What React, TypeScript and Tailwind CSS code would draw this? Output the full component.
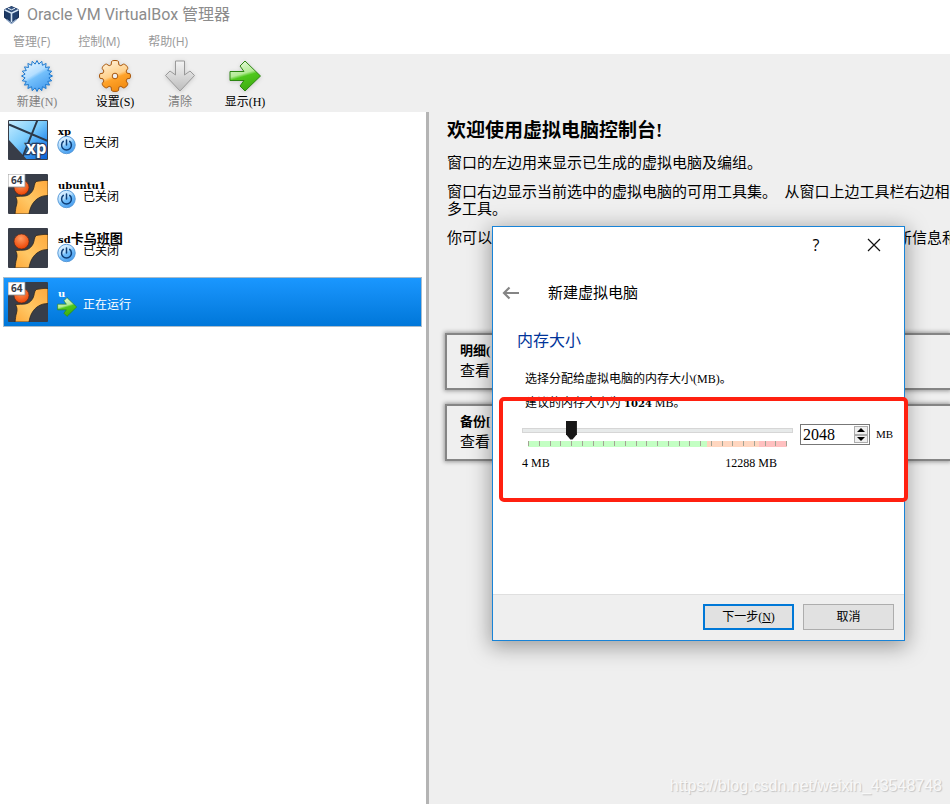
import { useState, type ReactNode } from 'react';

const CJK = "font-['Liberation_Serif','Noto_Sans_CJK_SC',serif]";
const UI = "font-['Open_Sans','Noto_Sans_CJK_SC',sans-serif]";

function star(count: number, outer: number, inner: number) {
  return Array.from({ length: count * 2 }, (_, i) => {
    const r = i % 2 ? inner : outer;
    const a = (Math.PI * i) / count - Math.PI / 2;
    return `${(16 + r * Math.cos(a)).toFixed(2)},${(16 + r * Math.sin(a)).toFixed(2)}`;
  }).join(' ');
}

function Gradients() {
  return (
    <svg className="absolute size-0" aria-hidden="true">
      <defs>
        <linearGradient id="blue" x1="0" y1="0" x2="0.6" y2="1">
          <stop offset="0" stopColor="#f2faff" />
          <stop offset="0.5" stopColor="#b4deff" />
          <stop offset="0.6" stopColor="#74c0fb" />
          <stop offset="1" stopColor="#4a9ff0" />
        </linearGradient>
        <linearGradient id="orange" x1="0.2" y1="0" x2="0.6" y2="1">
          <stop offset="0" stopColor="#fff3dc" />
          <stop offset="0.5" stopColor="#ffd08a" />
          <stop offset="0.6" stopColor="#ffa32a" />
          <stop offset="1" stopColor="#f08a10" />
        </linearGradient>
        <linearGradient id="gray" x1="0" y1="0" x2="0" y2="1">
          <stop offset="0" stopColor="#f4f4f4" />
          <stop offset="1" stopColor="#bcbcbc" />
        </linearGradient>
        <linearGradient id="green" x1="0" y1="0" x2="0.3" y2="1">
          <stop offset="0" stopColor="#effbe8" />
          <stop offset="0.5" stopColor="#b4eb96" />
          <stop offset="0.6" stopColor="#4fc81c" />
          <stop offset="1" stopColor="#3fae12" />
        </linearGradient>
        <linearGradient id="sky" x1="0" y1="0" x2="0.9" y2="1">
          <stop offset="0" stopColor="#c4ecff" />
          <stop offset="0.45" stopColor="#7cccfb" />
          <stop offset="0.7" stopColor="#3e9cf2" />
          <stop offset="1" stopColor="#0f66d8" />
        </linearGradient>
        <linearGradient id="amber" x1="1" y1="0" x2="0" y2="1">
          <stop offset="0" stopColor="#ffa93c" />
          <stop offset="0.6" stopColor="#ffc866" />
          <stop offset="1" stopColor="#ffa838" />
        </linearGradient>
        <radialGradient id="ball" cx="0.45" cy="0.3" r="0.65">
          <stop offset="0" stopColor="#ff9a60" />
          <stop offset="1" stopColor="#ee4a0a" />
        </radialGradient>
      </defs>
    </svg>
  );
}

function BoxLogo() {
  return (
    <svg className="size-5" viewBox="0 0 20 20" aria-hidden="true">
      <path d="M9.500 1 17 4.500v8L9.500 19 2 12.500v-8Z" fill="#162d54" />
      <path d="m3 4 6.500-2.500L16 4 9.500 7.500Z" fill="#33527f" />
      <path d="M2.500 5 9 8.300v9.200L3 12Z" fill="#1c3964" />
      <path d="M16.500 5 10 8.300v9.200l6-5.500Z" fill="#22406e" />
      <path d="m2.500 4.700 7 3.500 7-3.500M9.500 8v9" fill="none" stroke="#d3e3f3" strokeWidth="1.600" />
      <path d="m6 3.200 3.500 1.600L13 3.200" fill="none" stroke="#e9f1f9" strokeWidth="1" />
      <path d="m4.500 14.500 5 4 5-4" fill="none" stroke="#9cb4d2" strokeWidth="1.200" />
    </svg>
  );
}

function NewIcon() {
  return (
    <svg className="size-8 drop-shadow-sm" viewBox="0 0 32 32" aria-hidden="true">
      <polygon points={star(20, 15.5, 12)} fill="url(#blue)" stroke="#1f7ad0" strokeWidth="1" />
    </svg>
  );
}

function GearIcon() {
  return (
    <svg className="size-8 drop-shadow-sm" viewBox="0 0 32 32" aria-hidden="true">
      <path
        d="M12.500 1.500q1-1 2.500-1h2q1.500 0 2.500 1l.3 3.300 2 .9 2.700-1.600q1.300 0 2.300 1l1 1q1 1 1 2.300l-1.700 2.600.9 2.200 3 .5q.5 1 .5 2.300 0 1.300-.5 2.300l-3 .5-.9 2.200 1.700 2.600q0 1.300-1 2.300l-1 1q-1 1-2.300 1l-2.700-1.600-2 .9-.3 3.300q-1 .9-2.500.9h-2q-1.500 0-2.500-.9l-.3-3.300-2-.9-2.700 1.600q-1.300 0-2.300-1l-1-1q-1-1-1-2.300l1.700-2.600-.9-2.200-3-.5q-.5-1-.5-2.300 0-1.300.5-2.300l3-.5.9-2.200-1.700-2.600q0-1.300 1-2.300l1-1q1-1 2.300-1l2.700 1.600 2-.9Z"
        fill="url(#orange)"
        stroke="#a8570c"
        strokeWidth="1"
      />
      <circle cx="16" cy="16" r="2.800" fill="#efefef" stroke="#a8570c" />
    </svg>
  );
}

function DiscardIcon() {
  return (
    <svg className="size-8 drop-shadow-sm" viewBox="0 0 32 32" aria-hidden="true">
      <path d="M11.500 1h9v14l5.500-4 4.500 4.500L16 31 1.500 15.500 6 11l5.500 4Z" fill="url(#gray)" stroke="#999" />
    </svg>
  );
}

function ArrowIcon({ className }: { className: string }) {
  return (
    <svg className={className} viewBox="0 0 32 32" aria-hidden="true">
      <path d="M1 11.500h14L11 6l5-5 15.500 15L16 31l-5-5 4-5.500H1Z" fill="url(#green)" stroke="#2c8511" />
    </svg>
  );
}

function PowerIcon() {
  return (
    <svg className="size-5" viewBox="0 0 20 20" aria-hidden="true">
      <circle cx="9.500" cy="10" r="8.700" fill="url(#blue)" stroke="#5a9bd8" />
      <path d="M6.300 6.400a4.900 4.900 0 1 0 6.400 0M9.500 5v5" fill="none" stroke="#0f3f78" strokeWidth="1.500" strokeLinecap="round" />
    </svg>
  );
}

function XpIcon() {
  return (
    <svg className="size-10" viewBox="0 0 40 40" aria-hidden="true">
      <rect width="40" height="40" rx="1" fill="#383d48" />
      <path d="M1 1h38v38H18.500L1 20Z" fill="url(#sky)" />
      <path d="M1 4.500 40 21M29.500 0 15 36" stroke="#2c3848" strokeWidth="2" />
      <text x="18" y="34" fontSize="17" fontWeight="700" fontFamily="Open Sans, sans-serif" fill="#fff" stroke="#263d63" strokeWidth="2.500" paintOrder="stroke">
        xp
      </text>
    </svg>
  );
}

function UbuntuIcon({ wide }: { wide: boolean }) {
  return (
    <svg className="size-10" viewBox="0 0 40 40" aria-hidden="true">
      <rect width="40" height="40" rx="1" fill="#383d48" />
      <path
        d="M40 6.500C36 6 32 7 28 7.500 26 10 26.500 13 25 16c-2 4-5 5.500-8 6-3 .5-6 0-9.500.5C9 25 9.500 28 8.500 31 7.500 34 7.500 37 7 40h14c1-6 3-11 8-15 4-3 8-3.500 11-3.500Z"
        fill="url(#amber)"
        stroke="#2a2420"
        strokeWidth="0.800"
      />
      <circle cx="13.500" cy="13.500" r="7.500" fill="url(#ball)" stroke="#5f230e" strokeWidth="0.600" />
      {wide && (
        <>
          <path d="M0 0h17v13H0Z" fill="#fff" stroke="#8b8b8b" strokeWidth="0.800" />
          <text x="3" y="10" fontSize="10" fontWeight="700" fontFamily="Open Sans, sans-serif" fill="#383d48">
            64
          </text>
        </>
      )}
    </svg>
  );
}

function ToolButton({ icon, label, disabled }: { icon: ReactNode; label: string; disabled?: boolean }) {
  return (
    <button disabled={disabled} className="flex w-[42px] flex-col items-center text-xs text-black disabled:text-[#808080]">
      {icon}
      <span className="leading-5">{label}</span>
    </button>
  );
}

type Machine = { latin: string; cjk?: string; icon: ReactNode; running?: boolean };

const machines: Machine[] = [
  { latin: 'xp', icon: <XpIcon /> },
  { latin: 'ubuntu1', icon: <UbuntuIcon wide /> },
  { latin: 'sd', cjk: '卡乌班图', icon: <UbuntuIcon wide={false} /> },
  { latin: 'u', icon: <UbuntuIcon wide />, running: true },
];

function MachineRow({ machine }: { machine: Machine }) {
  const look = machine.running
    ? 'border-[#a9bccb] bg-linear-to-b from-[#1a97ff] to-[#0077d9] text-white'
    : 'border-transparent text-black';
  return (
    <li className={`flex h-[50px] items-center gap-2 border pl-1 ${look}`}>
      {machine.icon}
      <div className="flex flex-col pb-1 pl-px">
        <span className="flex h-3.5 items-center pl-px font-['DejaVu_Serif','Noto_Sans_CJK_SC',serif] text-[10px] font-bold">
          {machine.latin}
          {machine.cjk && <span className="text-[13px]">{machine.cjk}</span>}
        </span>
        <span className="flex h-3.5 items-center gap-1.5 text-xs">
          {machine.running ? <ArrowIcon className="size-5" /> : <PowerIcon />}
          <span className="pb-1">{machine.running ? '正在运行' : '已关闭'}</span>
        </span>
      </div>
    </li>
  );
}

function ToolCard({ title, text }: { title: string; text: string }) {
  return (
    <section className="h-[57px] border-2 border-r-0 border-[#858585] bg-[#efefef] px-[13px] py-1.5 shadow-[0_0_4px_1px_#999]">
      <h2 className="text-[13px] leading-5 font-bold">{title}</h2>
      <p className="text-[15px] leading-5">{text}</p>
    </section>
  );
}

function MemoryDialog() {
  const [memory, setMemory] = useState(2048);
  const step = (delta: number) => setMemory(Math.min(12288, Math.max(4, memory + delta)));
  return (
    <div
      role="dialog"
      aria-labelledby="wizard-title"
      className="absolute top-[226px] left-[492px] flex h-[415px] w-[413px] flex-col border border-[#1883d7] bg-white text-xs text-black shadow-[0_4px_20px_2px_rgba(0,0,0,0.35)]"
    >
      <div className="flex h-9 items-center justify-end gap-10 pr-5">
        <button aria-label="帮助" className={`w-4 text-base ${UI}`}>?</button>
        <button aria-label="关闭">
          <svg className="size-5" viewBox="0 0 20 20" aria-hidden="true">
            <path d="m4 4 12 12M16 4 4 16" stroke="#111" strokeWidth="1.200" />
          </svg>
        </button>
      </div>
      <div className="flex h-[60px] items-center gap-[27px] pl-2">
        <button aria-label="后退">
          <svg className="size-5" viewBox="0 0 20 20" aria-hidden="true">
            <path d="M18 10H3M8.500 4.500 3 10l5.500 5.500" fill="none" stroke="#858585" strokeWidth="2.200" />
          </svg>
        </button>
        <h1 id="wizard-title" className="pt-0.5 text-[15px]">新建虚拟电脑</h1>
      </div>
      <div className="flex flex-1 flex-col pt-1.5 pl-6">
        <h2 className="text-base leading-6 text-[#003399]">内存大小</h2>
        <p className="mt-4 pl-2 leading-5">选择分配给虚拟电脑的内存大小(MB)。</p>
        <p className="mt-1 pl-2 leading-5">
          建议的内存大小为{' '}
          <b className="font-['DejaVu_Serif',serif] text-[10px]">1024</b> MB。
        </p>
        <div className="mt-1.5 flex gap-2 pl-[5px]">
          <div className="w-[271px]">
            <input
              type="range"
              aria-label="内存大小"
              min={4}
              max={12288}
              value={memory}
              onChange={(e) => setMemory(Number(e.target.value))}
              className="block h-5 w-full appearance-none bg-transparent [&::-webkit-slider-runnable-track]:h-[5px] [&::-webkit-slider-runnable-track]:border [&::-webkit-slider-runnable-track]:border-[#d6d6d6] [&::-webkit-slider-runnable-track]:bg-[#e7eaea] [&::-webkit-slider-thumb]:-mt-2 [&::-webkit-slider-thumb]:h-[19px] [&::-webkit-slider-thumb]:w-[11px] [&::-webkit-slider-thumb]:appearance-none [&::-webkit-slider-thumb]:bg-[#171717] [&::-webkit-slider-thumb]:[clip-path:polygon(0_0,100%_0,100%_72%,60%_100%,40%_100%,0_72%)]"
            />
            <div className="mx-1.5 mt-px flex h-1.5 justify-between bg-[linear-gradient(to_right,#c3ffc3_69%,#ffd6bf_69%,#ffd6bf_89%,#ffc0c0_89%)]">
              {Array.from({ length: 25 }, (_, i) => (
                <i key={i} className="h-[5px] w-px bg-[#a3a394]" />
              ))}
            </div>
            <div className="mt-1.5 flex justify-between pr-4 leading-5">
              <span>4 MB</span>
              <span>12288 MB</span>
            </div>
          </div>
          <div className="-ml-px mt-1 flex h-[21px] w-[70px] border border-[#777] bg-white p-px">
            <input
              type="text"
              aria-label="内存 MB"
              value={memory}
              onChange={(e) => setMemory(Number(e.target.value) || 4)}
              className="w-[52px] min-w-0 pl-px text-base leading-4 outline-none"
            />
            <div className="flex w-3.5 flex-col">
              <button aria-label="增加" onClick={() => step(4)} className="flex flex-1 items-center justify-center border border-[#adadad] bg-[#efefef]">
                <svg className="h-1 w-2" viewBox="0 0 8 4" aria-hidden="true"><path d="M0 4 4 0l4 4Z" /></svg>
              </button>
              <button aria-label="减少" onClick={() => step(-4)} className="flex flex-1 items-center justify-center border border-[#adadad] bg-[#efefef]">
                <svg className="h-1 w-2" viewBox="0 0 8 4" aria-hidden="true"><path d="M0 0h8L4 4Z" /></svg>
              </button>
            </div>
          </div>
          <span className="mt-1 -ml-0.5 text-[11px] leading-5">MB</span>
        </div>
      </div>
      <div className="flex h-[46px] items-start justify-end gap-[9px] border-t border-[#dfdfdf] bg-[#efefef] pt-[9px] pr-2.5">
        <button className="h-[26px] w-[91px] border-2 border-[#0078d7] bg-[#e1e1e1]">下一步(<u>N</u>)</button>
        <button className="h-[26px] w-[91px] border border-[#adadad] bg-[#e1e1e1]">取消</button>
      </div>
      <div className="pointer-events-none absolute top-[170px] left-[6px] h-[105px] w-[409px] rounded-[5px] border-4 border-[#ff2010]" />
    </div>
  );
}

export default function App() {
  return (
    <div className={`relative flex min-h-screen flex-col overflow-hidden bg-white text-black ${CJK}`}>
      <Gradients />
      <header className="flex h-[30px] items-center gap-[5px] pl-0.5 font-['Roboto','Noto_Sans_CJK_SC',sans-serif] text-base text-[#8c8c8c]">
        <BoxLogo />
        <span>Oracle VM VirtualBox 管理器</span>
      </header>
      <nav className={`flex h-6 items-center gap-7 pl-[13px] text-xs text-[#999] ${UI}`}>
        <button>管理(F)</button>
        <button>控制(M)</button>
        <button>帮助(H)</button>
      </nav>
      <div className="flex h-[58px] items-start gap-9 bg-[#efefef] pt-1.5 pl-4">
        <ToolButton icon={<NewIcon />} label="新建(N)" disabled />
        <div className="flex gap-[23px]">
          <ToolButton icon={<GearIcon />} label="设置(S)" />
          <ToolButton icon={<DiscardIcon />} label="清除" disabled />
          <ToolButton icon={<ArrowIcon className="size-8 drop-shadow-sm" />} label="显示(H)" />
        </div>
      </div>
      <div className="flex flex-1">
        <ul className="flex w-[426px] shrink-0 flex-col gap-1 bg-white py-[3px] pr-1 pl-[3px]">
          {machines.map((m) => (
            <MachineRow key={m.latin} machine={m} />
          ))}
        </ul>
        <main className="min-w-0 flex-1 overflow-hidden border-l-[3px] border-[#b4b4b4] bg-[#efefef] whitespace-nowrap">
          <div className="flex h-[219px] flex-col gap-3 pt-[7px] pl-[18px] text-[15px] leading-[17px]">
            <h1 className="text-[19px] leading-6 font-bold">欢迎使用虚拟电脑控制台!</h1>
            <p>窗口的左边用来显示已生成的虚拟电脑及编组。</p>
            <p>
              窗口右边显示当前选中的虚拟电脑的可用工具集。{'\u00a0 '}从窗口上边工具栏右边相
              <br />
              多工具。
            </p>
            <p className="flex gap-[405px]">
              <span>你可以</span>
              <span>新信息和</span>
            </p>
          </div>
          <div className="flex flex-col gap-3.5 pt-0.5 pl-4">
            <ToolCard title="明细(" text="查看" />
            <ToolCard title="备份[" text="查看" />
          </div>
        </main>
      </div>
      <MemoryDialog />
      <p className="absolute right-2 bottom-2 font-['Liberation_Sans',sans-serif] text-base leading-5 text-[#f8f8f8] [text-shadow:1px_1px_1px_#c4c4c4]">
        https://blog.csdn.net/weixin_43548748
      </p>
    </div>
  );
}
